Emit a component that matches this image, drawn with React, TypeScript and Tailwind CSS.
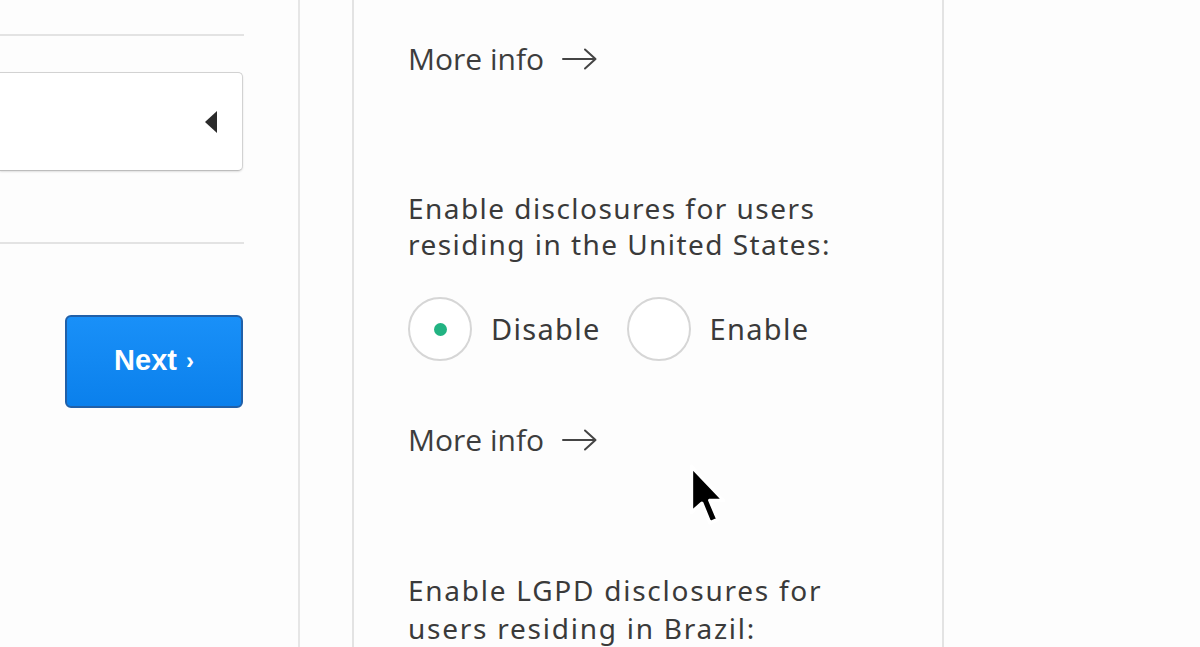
import React from "react";

function Arrow() {
  return (
    <svg width="36" height="22" viewBox="0 0 36 22" fill="none" className="ml-[18px]">
      <path d="M1 11 H33 M23 1.5 L33.5 11 L23 20.5" stroke="#444" strokeWidth="2" strokeLinecap="round" strokeLinejoin="round" />
    </svg>
  );
}

function MoreInfo() {
  return (
    <div className="flex items-center text-[30px] leading-[36px] text-[#3d3d3d]" style={{ fontFamily: '"Open Sans", sans-serif' }}>
      <span>More info</span>
      <Arrow />
    </div>
  );
}

function Radio({ checked, label }: { checked?: boolean; label: string }) {
  return (
    <div className="flex items-center">
      <div className="w-[64px] h-[64px] rounded-full border-2 border-[#d6d6d6] flex items-center justify-center bg-white">
        {checked && <div className="w-[13px] h-[13px] rounded-full bg-[#22b382]" />}
      </div>
      <span className="ml-[19px] text-[29px] tracking-[1.3px] text-[#3a3a3a]">{label}</span>
    </div>
  );
}

export default function App() {
  return (
    <div className="relative w-[1200px] h-[647px] overflow-hidden bg-[#fdfdfd] flex" style={{ fontFamily: '"Noto Sans", sans-serif' }}>
      {/* left column */}
      <div className="w-[244px] shrink-0 flex flex-col">
        <div className="mt-[34px] h-[2px] bg-[#e3e3e3]" />
        <div className="mt-[36px] h-[99px] bg-white border border-l-0 border-[#d2d2d2] border-b-[#bdbdbd] rounded-r-[5px] shadow-[0_1px_2px_rgba(0,0,0,0.12)] flex items-center justify-end pr-[25px] mr-[1px]">
          <div className="w-0 h-0 border-y-[11px] border-y-transparent border-r-[12px] border-r-[#2b2b2b]" />
        </div>
        <div className="mt-[71px] h-[2px] bg-[#e3e3e3]" />
        <div className="mt-[71px] flex justify-end pr-[1px]">
          <button className="w-[178px] h-[93px] rounded-[6px] border-2 border-[#2160a8] bg-gradient-to-b from-[#1990f8] to-[#0a80ec] text-white font-bold text-[29px] flex items-center justify-center pb-[2px]" style={{ fontFamily: '"Liberation Sans", Arial, sans-serif' }}>
            Next<span className="ml-[9px] text-[24px]">›</span>
          </button>
        </div>
      </div>

      {/* spacer with divider */}
      <div className="w-[54px] shrink-0" />
      <div className="w-[54px] shrink-0 border-l-2 border-[#e6e6e6]" />

      {/* card */}
      <div className="w-[592px] shrink-0 border-x-2 border-[#e3e3e3] pl-[54px] flex flex-col">
        <div className="mt-[41px]">
          <MoreInfo />
        </div>
        <div className="mt-[113px] text-[28px] leading-[36px] tracking-[1.45px] text-[#3a3a3a]">
          Enable disclosures for users
          <br />
          residing in the United States:
        </div>
        <div className="mt-[35px] flex items-center gap-[26px]">
          <Radio checked label="Disable" />
          <Radio label="Enable" />
        </div>
        <div className="mt-[61px]">
          <MoreInfo />
        </div>
        <div className="mt-[113px] text-[28px] leading-[38px] tracking-[1.75px] text-[#3a3a3a]">
          Enable LGPD disclosures for
          <br />
          users residing in Brazil:
        </div>
      </div>

      {/* mouse cursor */}
      <svg className="absolute left-[688px] top-[463px]" width="46" height="69" viewBox="0 0 40 60">
        <path d="M3 3 L3 43 L12 35 L19 52 L26 49 L19 32.5 L31 32.5 Z" fill="#000" stroke="#fff" strokeWidth="3" strokeLinejoin="round" />
      </svg>
    </div>
  );
}
